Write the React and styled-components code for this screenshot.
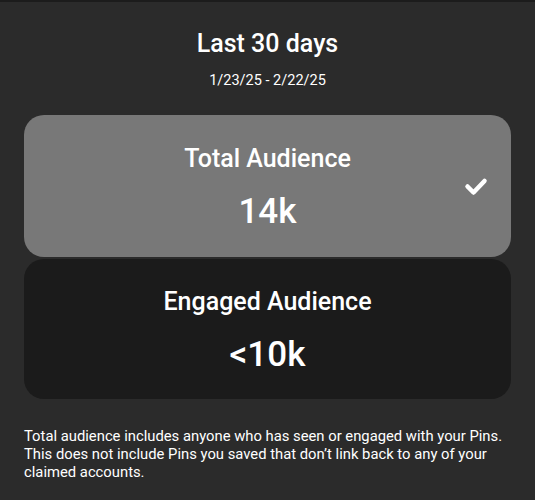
import React from "react";
import styled, { createGlobalStyle } from "styled-components";

const GlobalStyle = createGlobalStyle`
  html, body {
    margin: 0;
    padding: 0;
    background: #2b2b2b;
  }
  body {
    font-family: Roboto, "Liberation Sans", sans-serif;
    color: #ffffff;
  }
`;

const Page = styled.div`
  width: 535px;
  height: 500px;
  box-sizing: border-box;
  border-top: 2px solid #1c1c1c;
  padding: 0 24px;
  background: #2b2b2b;
  display: flex;
  flex-direction: column;
  overflow: hidden;
`;

const Header = styled.div`
  display: flex;
  flex-direction: column;
  align-items: center;
  padding-top: 27px;
`;

const Title = styled.h1`
  margin: 0;
  font-size: 25px;
  line-height: 30px;
  font-weight: 500;
`;

const DateRange = styled.div`
  margin-top: 13px;
  font-size: 14.5px;
  line-height: 18px;
`;

const Options = styled.div`
  margin-top: 25px;
  display: flex;
  flex-direction: column;
  gap: 2px;
`;

const OptionCard = styled.button`
  position: relative;
  height: ${(p) => p.$height}px;
  padding: 4px 0 0;
  border: none;
  border-radius: 20px;
  background: ${(p) => (p.$selected ? "#787878" : "#1b1b1b")};
  color: #ffffff;
  font-family: inherit;
  display: flex;
  flex-direction: column;
  align-items: center;
  justify-content: center;
  gap: 18px;
  cursor: pointer;
`;

const OptionLabel = styled.div`
  font-size: 25px;
  line-height: 30px;
  font-weight: 500;
`;

const OptionValue = styled.div`
  font-size: 35px;
  line-height: 40px;
  font-weight: 500;
`;

const Check = styled.svg`
  position: absolute;
  right: 23px;
  top: 50%;
  transform: translateY(-50%);
  width: 24px;
  height: 20px;
`;

const Note = styled.p`
  margin: 28px 0 0;
  font-size: 14.8px;
  line-height: 18px;
`;

const options = [
  { label: "Total Audience", value: "14k", selected: true, height: 142 },
  { label: "Engaged Audience", value: "<10k", selected: false, height: 140 },
];

export default function App() {
  return (
    <>
      <GlobalStyle />
      <Page>
        <Header>
          <Title>Last 30 days</Title>
          <DateRange>1/23/25 - 2/22/25</DateRange>
        </Header>
        <Options>
          {options.map((o) => (
            <OptionCard key={o.label} $selected={o.selected} $height={o.height}>
              <OptionLabel>{o.label}</OptionLabel>
              <OptionValue>{o.value}</OptionValue>
              {o.selected && (
                <Check viewBox="0 0 24 20">
                  <path
                    d="M3.5 10.5 L9.5 16.5 L20.5 5"
                    fill="none"
                    stroke="#ffffff"
                    strokeWidth="4.5"
                    strokeLinecap="round"
                    strokeLinejoin="round"
                  />
                </Check>
              )}
            </OptionCard>
          ))}
        </Options>
        <Note>
          Total audience includes anyone who has seen or engaged with your Pins.
          This does not include Pins you saved that don’t link back to any of your
          claimed accounts.
        </Note>
      </Page>
    </>
  );
}
